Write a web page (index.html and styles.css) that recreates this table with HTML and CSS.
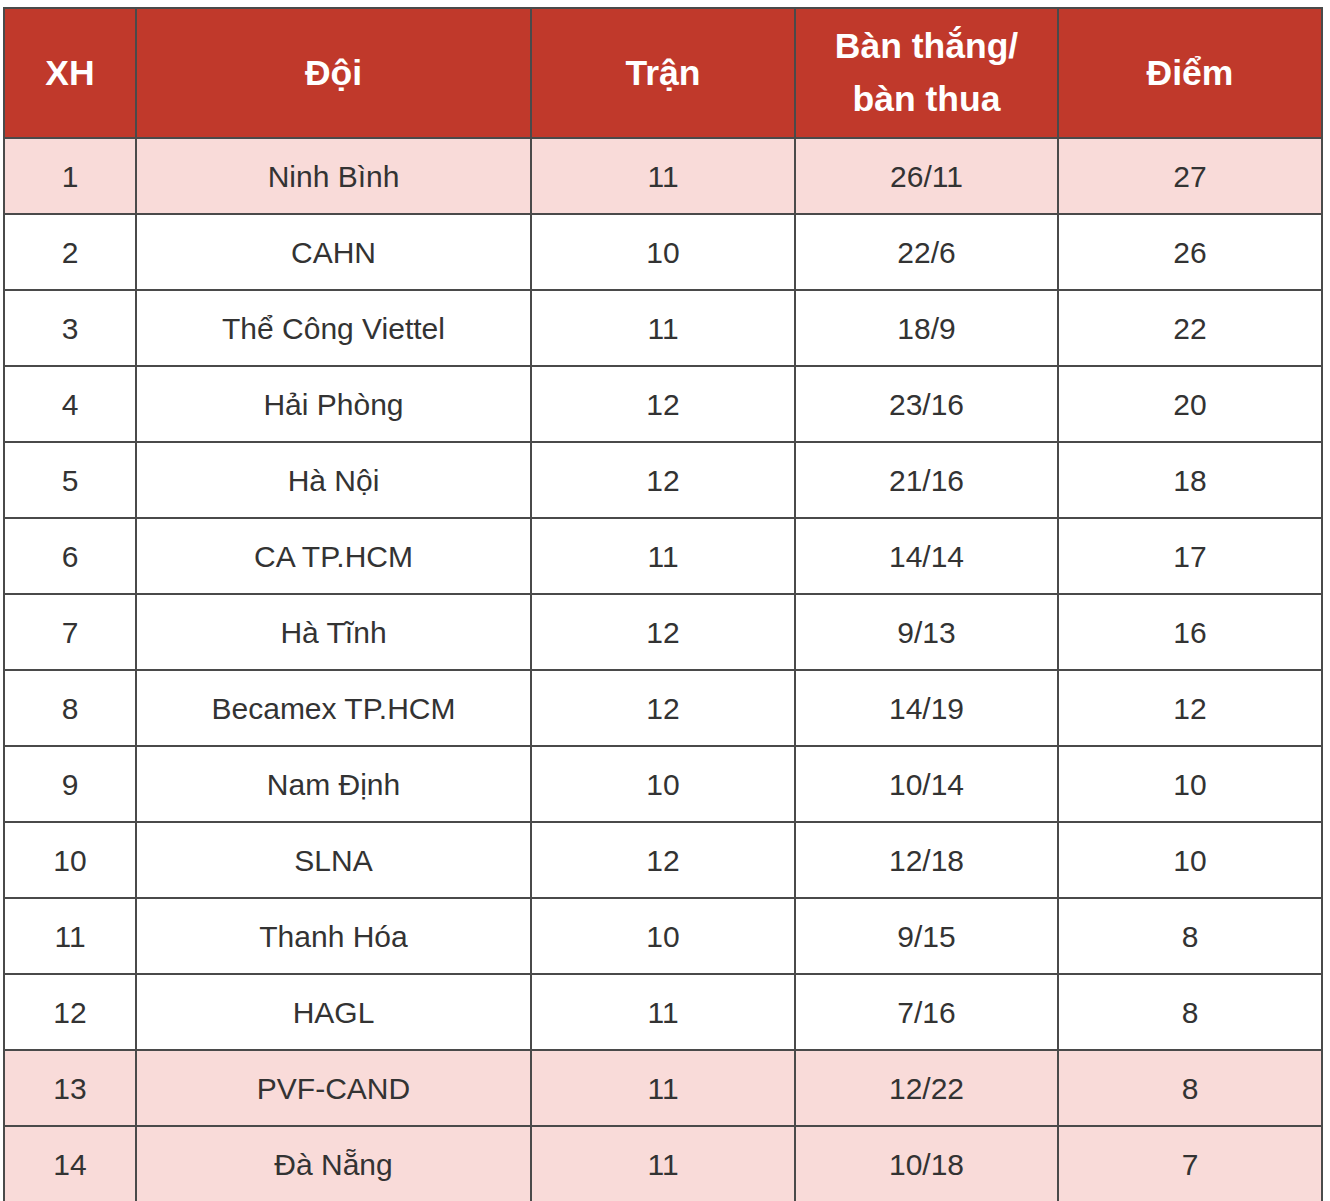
FILE: index.html
```html
<!DOCTYPE html>
<html lang="vi">
<head>
<meta charset="utf-8">
<link rel="stylesheet" href="styles.css">
</head>
<body>
<table class="standings">
  <colgroup>
    <col class="c-rank"><col class="c-team"><col class="c-played"><col class="c-goals"><col class="c-points">
  </colgroup>
  <thead>
    <tr><th>XH</th><th>Đội</th><th>Trận</th><th>Bàn thắng/<br>bàn thua</th><th>Điểm</th></tr>
  </thead>
  <tbody>
    <tr class="hl"><td>1</td><td>Ninh Bình</td><td>11</td><td>26/11</td><td>27</td></tr>
    <tr><td>2</td><td>CAHN</td><td>10</td><td>22/6</td><td>26</td></tr>
    <tr><td>3</td><td>Thể Công Viettel</td><td>11</td><td>18/9</td><td>22</td></tr>
    <tr><td>4</td><td>Hải Phòng</td><td>12</td><td>23/16</td><td>20</td></tr>
    <tr><td>5</td><td>Hà Nội</td><td>12</td><td>21/16</td><td>18</td></tr>
    <tr><td>6</td><td>CA TP.HCM</td><td>11</td><td>14/14</td><td>17</td></tr>
    <tr><td>7</td><td>Hà Tĩnh</td><td>12</td><td>9/13</td><td>16</td></tr>
    <tr><td>8</td><td>Becamex TP.HCM</td><td>12</td><td>14/19</td><td>12</td></tr>
    <tr><td>9</td><td>Nam Định</td><td>10</td><td>10/14</td><td>10</td></tr>
    <tr><td>10</td><td>SLNA</td><td>12</td><td>12/18</td><td>10</td></tr>
    <tr><td>11</td><td>Thanh Hóa</td><td>10</td><td>9/15</td><td>8</td></tr>
    <tr><td>12</td><td>HAGL</td><td>11</td><td>7/16</td><td>8</td></tr>
    <tr class="hl"><td>13</td><td>PVF-CAND</td><td>11</td><td>12/22</td><td>8</td></tr>
    <tr class="hl"><td>14</td><td>Đà Nẵng</td><td>11</td><td>10/18</td><td>7</td></tr>
  </tbody>
</table>
</body>
</html>
```
FILE: styles.css
```css
html, body {
  margin: 0;
  padding: 0;
  background: #ffffff;
}
body {
  padding: 7px 0 0 3px;
  font-family: "Liberation Sans", Arial, sans-serif;
}
.standings {
  border-collapse: collapse;
  table-layout: fixed;
  width: 1320px;
}
.c-rank { width: 132px; }
.c-team { width: 395px; }
.c-played { width: 264px; }
.c-goals { width: 263px; }
.c-points { width: 264px; }
.standings th,
.standings td {
  border: 2px solid #4a4a4a;
  text-align: center;
  vertical-align: middle;
}
.standings th {
  background: #c0392b;
  color: #ffffff;
  font-weight: bold;
  font-size: 35.5px;
  line-height: 53px;
  padding: 11px 0 11px;
}
.standings td {
  color: #333333;
  font-size: 30px;
  line-height: 44px;
  padding: 16px 0 14px;
}
.standings tr.hl td {
  background: #f9dbd9;
}
```
